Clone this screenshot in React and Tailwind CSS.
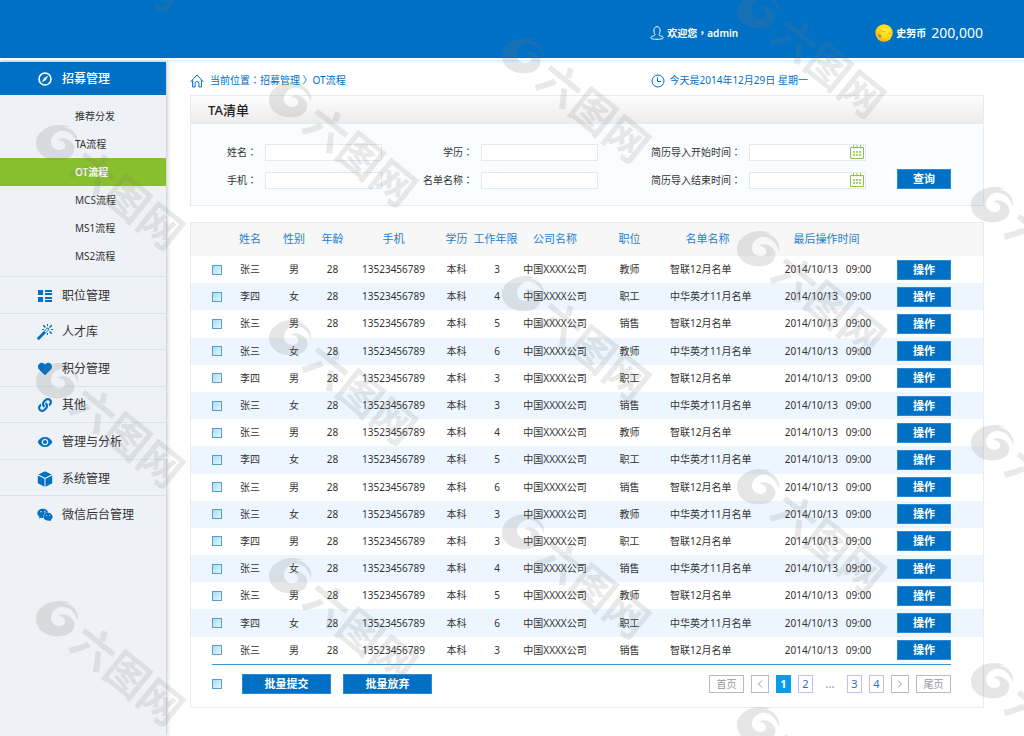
import { FaHeart, FaLink, FaWeixin } from "react-icons/fa";
import { ImMagicWand } from "react-icons/im";
import { MdVisibility } from "react-icons/md";

const CompassIcon = () => (
  <svg viewBox="0 0 14 14" className="w-3.5 h-3.5" fill="none" aria-hidden="true">
    <circle cx="7" cy="7" r="6" stroke="currentColor" strokeWidth="1.6" />
    <path d="M10.2 3.8 8 8 3.8 10.2 6 6z" fill="currentColor" />
  </svg>
);

const ListIcon = () => (
  <svg viewBox="0 0 14 14" className="w-3.5 h-3.5" fill="currentColor" aria-hidden="true">
    <path d="M0 1h5v5H0zM7 1h7v2H7zM7 4h7v2H7zM0 8h5v5H0zM7 8h7v2H7zM7 11h7v2H7z" />
  </svg>
);

const CubeIcon = () => (
  <svg viewBox="0 0 16 16" className="w-4 h-4" fill="currentColor" aria-hidden="true">
    <path d="M8 .3 14.6 3.4 8 6.8 1.4 3.4zM.8 4.4 7.5 7.8V15.7L.8 12.2zM15.2 4.4 8.5 7.8V15.7L15.2 12.2z" />
  </svg>
);

const HomeIcon = () => (
  <svg viewBox="0 0 14 14" className="w-3.5 h-3.5" fill="none" stroke="currentColor" strokeLinejoin="round" strokeLinecap="round" aria-hidden="true">
    <path d="M.8 7.6 7 1l6.2 6.6M2.6 6.5v6.5h2.500V9.400a1.900 1.900 0 0 1 3.800 0V13h2.500V6.500" />
  </svg>
);

const ClockIcon = () => (
  <svg viewBox="0 0 14 14" className="w-3.5 h-3.5" fill="none" stroke="currentColor" aria-hidden="true">
    <circle cx="7" cy="7" r="6" />
    <path d="M6.500 3.500v4H10" />
  </svg>
);

const UserIcon = () => (
  <svg viewBox="0 0 14 14" className="w-3.5 h-3.5" fill="none" stroke="currentColor" aria-hidden="true">
    <path d="M4.900 8.300C3.600 6.600 3 .7 7 .7s3.400 5.900 2.100 7.600c-.4.800.3 1.300 1.700 1.700 1.600.4 2.400 1 2.400 1.900 0 1-2.600 1.400-6.200 1.400S.8 12.900.8 11.900c0-.9.8-1.500 2.400-1.900 1.400-.4 2.100-.9 1.700-1.700z" />
  </svg>
);

const CoinIcon = () => (
  <svg viewBox="0 0 18 18" className="w-[18px] h-[18px]" aria-hidden="true">
    <defs>
      <radialGradient id="coin" cx="0.6" cy="0.35" r="0.7">
        <stop offset="0" stopColor="#fff04a" />
        <stop offset="0.6" stopColor="#ffd80c" />
        <stop offset="1" stopColor="#f5a81c" />
      </radialGradient>
    </defs>
    <circle cx="9" cy="9" r="8.700" fill="url(#coin)" />
    <path d="M3 10.500c1.500-.8 3 0 3.500 1.500L5.500 14C4 13.500 3 12 3 10.500z" fill="#a98a5c" />
    <path d="M4 4.500c2 2.500 5 3.500 7 3M11.500 11c1.500-1.500 3-1.800 4.500-1.500" fill="none" stroke="#f3b51e" />
  </svg>
);

const CalendarIcon = () => (
  <svg viewBox="0 0 14 14" className="w-3.5 h-3.5" fill="none" stroke="#8cc63f" aria-hidden="true">
    <path d="M.5 2.500h13v11H.5zM3.500 0v3.500M7 0v3.500M10.500 0v3.500" />
    <path d="M3 7h2M6 7h2M9 7h2M3 10h2M6 10h2M9 10h2" strokeWidth="1.600" />
  </svg>
);

const subMenu = ["推荐分发", "TA流程", "OT流程", "MCS流程", "MS1流程", "MS2流程"];

const menu = [
  { label: "职位管理", icon: <ListIcon /> },
  { label: "人才库", icon: <ImMagicWand className="w-4 h-4 -scale-x-100" /> },
  { label: "积分管理", icon: <FaHeart className="w-3.5 h-3.5" /> },
  { label: "其他", icon: <FaLink className="w-3.5 h-3.5" /> },
  { label: "管理与分析", icon: <MdVisibility className="w-4 h-4" /> },
  { label: "系统管理", icon: <CubeIcon /> },
  { label: "微信后台管理", icon: <FaWeixin className="w-4 h-4" /> },
];

const names = [
  "张三", "李四", "张三", "张三", "李四",
  "张三", "张三", "李四", "张三", "张三",
  "李四", "张三", "张三", "李四", "张三",
];
const years = [3, 4, 5, 6, 3, 3, 4, 5, 6, 3, 3, 4, 5, 6, 3];
const jobs = ["教师", "职工", "销售"];

const rows = names.map((name, i) => ({
  name,
  sex: i % 2 ? "女" : "男",
  years: years[i],
  job: jobs[i % 3],
  list: i % 2 ? "中华英才11月名单" : "智联12月名单",
}));

const Checkbox = ({ label }) => (
  <input
    type="checkbox"
    aria-label={label}
    className="block appearance-none w-2.5 h-2.5 border border-[#5b9fc0] bg-linear-to-br from-[#a5dcf8] to-[#e4f6ff] checked:bg-[#0070c4]"
  />
);

const Button = ({ className, children }) => (
  <button
    type="button"
    className={`h-5 border border-[#2a8ad4] bg-[#0070c4] text-[11px] leading-[18px] font-bold text-white cursor-pointer hover:bg-[#0062ad] ${className}`}
  >
    {children}
  </button>
);

// full-width punctuation centred in its box
const Mark = ({ children }) => <span className="font-['Noto_Sans_CJK_TC',sans-serif] leading-none">{children}</span>;

const Field = ({ id, label, date }) => (
  <>
    <label htmlFor={id} className="pr-2 text-right leading-[17px] whitespace-nowrap">
      {label}
      <Mark>：</Mark>
    </label>
    <div className="relative">
      <input id={id} type="text" className="block w-full h-[17px] border border-[#e6e8e9] bg-white px-1 outline-none" />
      {date && (
        <button type="button" aria-label="选择日期" className="absolute right-0.5 top-px cursor-pointer">
          <CalendarIcon />
        </button>
      )}
    </div>
  </>
);

const pageBox = "h-[18px] border leading-4 text-center cursor-pointer";

const marks = [
  [58, -94], [58, 144], [58, 382], [58, 620],
  [291, 101], [291, 339], [291, 577],
  [524, 57], [524, 295], [524, 533],
  [759, 12], [759, 250], [759, 488], [759, 726],
  [993, 206], [993, 444], [993, 682],
];

const Watermark = () => (
  <svg className="absolute inset-0 w-full h-full pointer-events-none" aria-hidden="true">
    <g fill="#777" fillOpacity="0.18">
      {marks.map(([x, y]) => (
        <g key={`${x},${y}`} transform={`translate(${x} ${y})`}>
          <path d="M12-17C-4-23-22-14-22-1-22 11-9 18 4 16 13 15 18 8 16 2 13-5 5-8 0-4 5-4 8-1 7 3 5 7-3 7-6 2-9-4-5-11 2-13 10-14 17-9 20 1 22-9 13-18 2-17z" />
          <text x="24" y="15" transform="rotate(39)" fontSize="43" fontWeight="700">
            六图网
          </text>
        </g>
      ))}
    </g>
  </svg>
);

const App = () => {
  return (
    <div className="relative flex flex-col min-h-screen overflow-hidden bg-white text-[10px] text-[#333] font-['Noto_Sans','Noto_Sans_CJK_SC',sans-serif]">
      <header className="flex items-center justify-end h-[58px] pt-2 pr-[41px] bg-[#0070c4] text-white">
        <div className="flex items-center gap-[3px] mr-[137px] font-semibold">
          <UserIcon />
          <span>欢迎您<Mark>，</Mark>admin</span>
        </div>
        <div className="flex items-center gap-[3px] font-semibold">
          <CoinIcon />
          <span>史努币</span>
          <span className="pl-0.5 text-sm leading-5 font-normal">200,000</span>
        </div>
      </header>
      <div className="h-1 border-b-2 border-[#eef1f6]"></div>

      <div className="flex flex-1">
        <aside className="w-[166px] shrink-0 bg-[#eef2f6] shadow-[1px_0_4px_rgba(0,0,0,0.25)]">
          <nav>
            <a href="#" className="flex items-center h-[33px] pt-px pl-[38px] gap-2.5 bg-[#0070c4] text-white text-xs font-medium">
              <CompassIcon />
              招募管理
            </a>
            <ul className="pt-[7px] pb-1.5">
              {subMenu.map((item) => (
                <li key={item}>
                  <a
                    href="#"
                    className={`block h-7 pl-[75px] leading-7 ${item === "OT流程" ? "bg-[#88bf2c] text-white font-semibold" : ""}`}
                  >
                    {item}
                  </a>
                </li>
              ))}
            </ul>
            <ul className="grid grid-rows-7 h-64">
              {menu.map(({ label, icon }) => (
                <li key={label} className="border-t border-[#d9e4f3]">
                  <a href="#" className="flex items-center h-full pt-0.5 pl-[37px] gap-[9px] text-xs">
                    <span className="flex justify-center w-4 text-[#0070c4]">{icon}</span>
                    {label}
                  </a>
                </li>
              ))}
            </ul>
          </nav>
        </aside>

        <main className="flex-1 min-w-0 pl-6 pr-10 pb-7">
          <div className="flex items-center h-[33px] pt-1 text-[#0070c4]">
            <div className="flex items-center w-[58%] gap-1.5">
              <HomeIcon />
              <span>
                当前位置<Mark>：</Mark><a href="#">招募管理</a> 〉<a href="#">OT流程</a>
              </span>
            </div>
            <div className="flex items-center gap-[5px]">
              <ClockIcon />
              <span>今天是2014年12月29日 星期一</span>
            </div>
          </div>

          <section className="border border-[#e9ebed] bg-[#f9fdff]">
            <h1 className="h-7 pl-[17px] leading-7 text-[13px] font-medium text-[#222] border-b border-[#e9e9e9] bg-linear-to-b from-[#fdfdfd] to-[#ececec]">
              TA清单
            </h1>
            <form className="grid grid-cols-[74fr_117fr_99fr_117fr_151fr_117fr_31fr_54px_32fr] items-end gap-y-2 pt-5 pb-4">
              <Field id="name" label="姓名" />
              <Field id="degree" label="学历" />
              <Field id="start" label="简历导入开始时间" date />
              <div className="col-span-3"></div>
              <Field id="mobile" label="手机" />
              <Field id="list" label="名单名称" />
              <Field id="end" label="简历导入结束时间" date />
              <Button className="col-start-8 w-[54px]">查询</Button>
            </form>
          </section>

          <section className="mt-4 border border-[#e9ebed]">
            <table className="table-fixed w-full h-[441px] text-center whitespace-nowrap">
              <colgroup>
                <col className="w-[39px]" />
                <col className="w-[40px]" />
                <col className="w-[48px]" />
                <col className="w-[29px]" />
                <col className="w-[93px]" />
                <col className="w-[33px]" />
                <col className="w-[45px]" />
                <col className="w-[74px]" />
                <col className="w-[75px]" />
                <col className="w-[81px]" />
                <col className="w-[149px]" />
                <col className="w-[86px]" />
              </colgroup>
              <thead>
                <tr className="h-[33px] bg-[#f7f7f7] text-[11px] text-[#1f7fd0] *:p-0 *:font-normal">
                  <th></th>
                  <th>姓名</th>
                  <th>性别</th>
                  <th>年龄</th>
                  <th>手机</th>
                  <th>学历</th>
                  <th>工作年限</th>
                  <th>公司名称</th>
                  <th>职位</th>
                  <th>名单名称</th>
                  <th><span className="pl-2">最后操作时间</span></th>
                  <th></th>
                </tr>
              </thead>
              <tbody>
                {rows.map((row, i) => (
                  <tr key={i} className="even:bg-[#edf6ff] *:p-0">
                    <td>
                      <div className="pl-[21px]">
                        <Checkbox label={`选择第${i + 1}行`} />
                      </div>
                    </td>
                    <td>{row.name}</td>
                    <td>{row.sex}</td>
                    <td>28</td>
                    <td>13523456789</td>
                    <td>本科</td>
                    <td><span className="pl-[3px]">{row.years}</span></td>
                    <td>中国XXXX公司</td>
                    <td>{row.job}</td>
                    <td className="text-left"><span className="pl-[3px]">{row.list}</span></td>
                    <td><span className="pl-[11px]">2014/10/13&nbsp;&nbsp;&nbsp;09:00</span></td>
                    <td>
                      <Button className="block w-[54px]">操作</Button>
                    </td>
                  </tr>
                ))}
              </tbody>
            </table>

            <div className="flex items-center ml-[21px] mr-8 pt-[9px] pb-[13px] border-t border-[#3c96d8]">
              <Checkbox label="全选" />
              <Button className="w-[89px] ml-5">批量提交</Button>
              <Button className="w-[89px] ml-3">批量放弃</Button>
              <nav aria-label="分页" className="flex items-center gap-[7px] ml-auto text-[#999]">
                <button type="button" className={`${pageBox} w-[35px] border-[#bbb]`}>首页</button>
                <button type="button" aria-label="上一页" className={`${pageBox} flex items-center justify-center w-[18px] border-[#bbb]`}>
                  <svg viewBox="0 0 8 8" className="w-2 h-2" fill="none" stroke="currentColor" aria-hidden="true">
                    <path d="M6 .5 2.500 4 6 7.500" />
                  </svg>
                </button>
                <button type="button" aria-current="page" className={`${pageBox} w-[15px] border-[#0a9bea] bg-[#0a9bea] text-[11px] font-bold text-white`}>1</button>
                <button type="button" className={`${pageBox} w-[15px] border-[#c3bbf5] text-[11px] text-[#2a6fd0]`}>2</button>
                <span className="w-5 text-center text-xs leading-4">...</span>
                <button type="button" className={`${pageBox} w-[15px] border-[#c3bbf5] text-[11px] text-[#2a6fd0]`}>3</button>
                <button type="button" className={`${pageBox} w-[15px] border-[#c3bbf5] text-[11px] text-[#2a6fd0]`}>4</button>
                <button type="button" aria-label="下一页" className={`${pageBox} flex items-center justify-center w-[18px] border-[#bbb]`}>
                  <svg viewBox="0 0 8 8" className="w-2 h-2" fill="none" stroke="currentColor" aria-hidden="true">
                    <path d="M2 .5 5.500 4 2 7.500" />
                  </svg>
                </button>
                <button type="button" className={`${pageBox} w-[35px] border-[#bbb]`}>尾页</button>
              </nav>
            </div>
          </section>
        </main>
      </div>
      <Watermark />
    </div>
  );
};

export default App;
